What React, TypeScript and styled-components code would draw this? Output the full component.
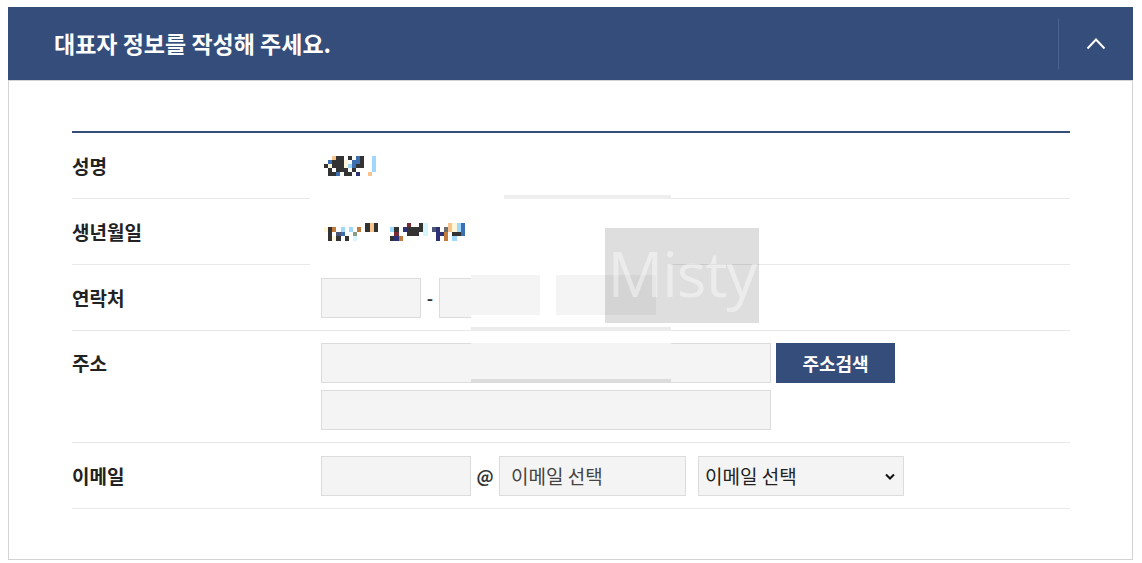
import React from "react";
import styled, { createGlobalStyle } from "styled-components";

const GlobalStyle = createGlobalStyle`
  body {
    margin: 7px 8px;
    background: #ffffff;
    font-family: "Noto Sans CJK KR", "Noto Sans", sans-serif;
    color: #222222;
  }
`;

const NAVY = "#344d7a";

const Page = styled.div`
  position: relative;
  width: 1125px;
`;

const Header = styled.div`
  display: flex;
  align-items: center;
  height: 73px;
  background-color: ${NAVY};
`;

const Title = styled.h2`
  flex: 1;
  margin: 0;
  padding-left: 46px;
  font-size: 23px;
  font-weight: 700;
  line-height: 1;
  color: #ffffff;
`;

const ToggleButton = styled.button`
  display: flex;
  align-items: center;
  justify-content: center;
  width: 75px;
  height: 50px;
  padding: 0;
  border: 0;
  border-left: 1px solid #4b638f;
  background: transparent;
  cursor: pointer;
`;

const Body = styled.div`
  border: 1px solid #d3d3d3;
  padding: 50px 62px 50px 63px;
`;

const FormTable = styled.div`
  border-top: 2px solid ${NAVY};
`;

const Row = styled.div<{ $top?: boolean }>`
  display: flex;
  align-items: ${(p) => (p.$top ? "flex-start" : "center")};
  min-height: 66px;
  padding: ${(p) => (p.$top ? "12px 0" : "0")};
  border-bottom: 1px solid #e9e9e9;
  box-sizing: border-box;
`;

const Label = styled.div`
  width: 249px;
  flex-shrink: 0;
  font-size: 19px;
  font-weight: 700;
  line-height: 40px;
  color: #222222;
`;

const Value = styled.div`
  display: flex;
  flex-direction: column;
  gap: 7px;
`;

const Line = styled.div`
  display: flex;
  align-items: center;
`;

const TextInput = styled.input<{ $w: number }>`
  width: ${(p) => p.$w}px;
  height: 40px;
  box-sizing: border-box;
  padding: 0 11px;
  border: 1px solid #dcdcdc;
  border-radius: 0;
  background: #f4f4f4;
  font-family: inherit;
  font-size: 19px;
  color: #333333;
  outline: none;

  &::placeholder {
    color: #444444;
  }
`;

const Sep = styled.span<{ $w: number }>`
  width: ${(p) => p.$w}px;
  text-align: center;
  font-size: 17px;
  font-weight: 700;
  color: #333333;
`;

const SearchButton = styled.button`
  width: 119px;
  height: 40px;
  margin-left: 5px;
  border: 0;
  border-radius: 0;
  background: ${NAVY};
  color: #ffffff;
  font-family: inherit;
  font-size: 18px;
  font-weight: 700;
  cursor: pointer;
`;

const SelectWrap = styled.div`
  position: relative;
  margin-left: 12px;
`;

const Select = styled.select`
  width: 206px;
  height: 40px;
  padding: 0 24px 0 6px;
  border: 1px solid #dcdcdc;
  border-radius: 0;
  background: #f4f4f4;
  appearance: none;
  font-family: inherit;
  font-size: 19px;
  color: #222222;
  outline: none;
`;

const SelectArrow = styled.svg`
  position: absolute;
  right: 9px;
  top: 17px;
  pointer-events: none;
`;

const MosaicGrid = styled.div<{ $cols: number; $cw: number; $ch: number }>`
  position: relative;
  z-index: 2;
  display: grid;
  grid-template-columns: repeat(${(p) => p.$cols}, ${(p) => p.$cw}px);
  grid-auto-rows: ${(p) => p.$ch}px;
  margin-left: 3px;
`;

const Cell = styled.span<{ $c: string }>`
  background: ${(p) => p.$c};
`;

/* patches left behind by the screenshot's editing, drawn over the form */
const Patch = styled.div`
  position: absolute;
  z-index: 1;
  background: #ffffff;
`;

const Shade = styled.div<{ $bg: string }>`
  position: absolute;
  background: ${(p) => p.$bg};
`;

const Watermark = styled.div`
  position: absolute;
  z-index: 3;
  left: 597px;
  top: 221px;
  width: 154px;
  height: 95px;
  display: flex;
  align-items: center;
  justify-content: center;
  background: rgba(0, 0, 0, 0.13);
  font-family: "Open Sans", sans-serif;
  font-size: 62px;
  letter-spacing: -1px;
  color: rgba(255, 255, 255, 0.42);
  line-height: 1;
  padding-bottom: 6px;
  box-sizing: border-box;
`;

const COLORS: Record<string, string> = {
  D: "#333333",
  P: "#f7c48e",
  C: "#fdf6d8",
  B: "#3b6fb0",
  L: "#9fd8fb",
  O: "#c17a3a",
  N: "#2e3175",
  R: "#7a2a34",
  T: "#d6f6fb",
  S: "#4a5575",
  G: "#6d6d6d",
  g: "#8c9c84",
};

const nameMap = [
  "..PDD.D.BD..L",
  ".BDDDC.BBD..L",
  "DCDDDCLBDD..L",
  ".D.DDD.D....L",
  ".DDB.DD.N..P.",
];

const birthMap = [
  "..........DPD.......R..DT.....PCLB",
  "CDO.L.L.O.DPD...LD.NDDDDT.SN.GPCLB",
  ".D.SB..g.........R..DDD.T..NNO.DDB",
  ".DCD.D.T........DNO........N.O.L..",
];

const Mosaic = ({ map, cw, ch }: { map: string[]; cw: number; ch: number }) => (
  <MosaicGrid $cols={map[0].length} $cw={cw} $ch={ch}>
    {map.flatMap((row, r) =>
      row.split("").map((k, c) => <Cell key={`${r}-${c}`} $c={COLORS[k] || "transparent"} />)
    )}
  </MosaicGrid>
);

const App = () => {
  return (
    <Page>
      <GlobalStyle />
      <Header>
        <Title>대표자 정보를 작성해 주세요.</Title>
        <ToggleButton aria-label="접기">
          <svg width="20" height="13" viewBox="0 0 20 13">
            <polyline points="1.5,11.5 10,2.5 18.5,11.5" fill="none" stroke="#ffffff" strokeWidth="2" />
          </svg>
        </ToggleButton>
      </Header>
      <Body>
        <FormTable>
          <Row>
            <Label>성명</Label>
            <Mosaic map={nameMap} cw={4} ch={4} />
          </Row>
          <Row>
            <Label>생년월일</Label>
            <Mosaic map={birthMap} cw={4.15} ch={4.5} />
          </Row>
          <Row>
            <Label>연락처</Label>
            <Line>
              <TextInput $w={100} />
              <Sep $w={18}>-</Sep>
              <TextInput $w={100} />
              <Sep $w={18}>-</Sep>
              <TextInput $w={100} />
            </Line>
          </Row>
          <Row $top>
            <Label>주소</Label>
            <Value>
              <Line>
                <TextInput $w={450} />
                <SearchButton>주소검색</SearchButton>
              </Line>
              <Line>
                <TextInput $w={450} />
              </Line>
            </Value>
          </Row>
          <Row>
            <Label>이메일</Label>
            <Line>
              <TextInput $w={150} />
              <Sep $w={28}>@</Sep>
              <TextInput $w={187} placeholder="이메일 선택" />
              <SelectWrap>
                <Select defaultValue="">
                  <option value="">이메일 선택</option>
                  <option value="naver.com">naver.com</option>
                  <option value="gmail.com">gmail.com</option>
                  <option value="daum.net">daum.net</option>
                </Select>
                <SelectArrow width="10" height="7" viewBox="0 0 10 7">
                  <polyline points="1,1.5 5,5.5 9,1.5" fill="none" stroke="#111111" strokeWidth="2" />
                </SelectArrow>
              </SelectWrap>
            </Line>
          </Row>
        </FormTable>
      </Body>

      <Patch style={{ left: 302, top: 183, width: 361, height: 76 }}>
        <Shade $bg="#eeeeee" style={{ left: 194, top: 5, width: 167, height: 4 }} />
      </Patch>
      <Patch style={{ left: 463, top: 259, width: 200, height: 117 }}>
        <Shade $bg="#f4f4f4" style={{ left: 0, top: 9, width: 69, height: 40 }} />
        <Shade $bg="#f4f4f4" style={{ left: 85, top: 9, width: 100, height: 40 }} />
        <Shade $bg="#ececec" style={{ left: 0, top: 61, width: 200, height: 4 }} />
        <Shade $bg="#f4f4f4" style={{ left: 0, top: 77, width: 200, height: 36 }} />
        <Shade $bg="#dcdcdc" style={{ left: 0, top: 113, width: 200, height: 4 }} />
      </Patch>
      <Watermark>Misty</Watermark>
    </Page>
  );
};

export default App;
